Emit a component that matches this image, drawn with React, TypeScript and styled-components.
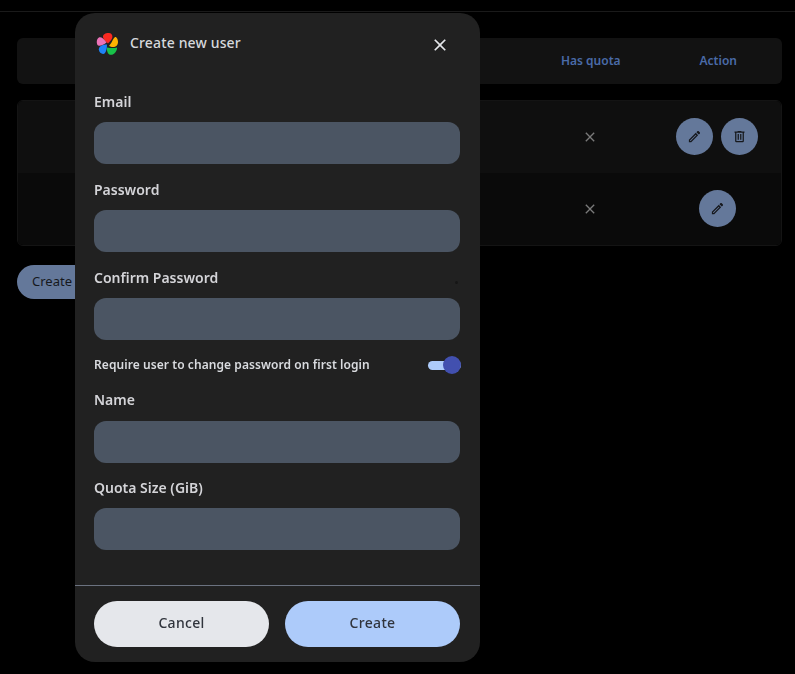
import * as React from 'react'
import styled, { createGlobalStyle } from 'styled-components'

const fontStack = `'Noto Sans', 'Open Sans', sans-serif`

const GlobalStyle = createGlobalStyle`
  html, body {
    margin: 0;
    height: 100%;
    background: #000;
    font-family: ${fontStack};
  }
  * {
    box-sizing: border-box;
  }
`

const fields = ['Email', 'Password', 'Confirm Password']
const extraFields = ['Name', 'Quota Size (GiB)']

const pencilPath =
  'M14.06,9L15,9.94L5.92,19H5V18.08L14.06,9M17.66,3C17.41,3 17.15,3.1 16.96,3.29L15.13,5.12L18.88,8.87L20.71,7.04C21.1,6.65 21.1,6 20.71,5.63L18.37,3.29C18.17,3.09 17.92,3 17.66,3M14.06,6.19L3,17.25V21H6.75L17.81,9.94L14.06,6.19Z'
const trashPath =
  'M9,3V4H4V6H5V19A2,2 0 0,0 7,21H17A2,2 0 0,0 19,19V6H20V4H15V3H9M7,6H17V19H7V6M9,8V17H11V8H9M13,8V17H15V8H13Z'
const closePath =
  'M19,6.41L17.59,5L12,10.59L6.41,5L5,6.41L10.59,12L5,17.59L6.41,19L12,13.41L17.59,19L19,17.59L13.41,12L19,6.41Z'

const Icon = ({ d, size, color }: { d: string; size: number; color?: string }) => (
  <svg width={size} height={size} viewBox="0 0 24 24" fill={color || 'currentColor'}>
    <path d={d} />
  </svg>
)

const Logo = () => (
  <svg width="24" height="24" viewBox="0 0 24 24">
    <path d="M7 4.500C7 2 10 .8 13 1 16 1.200 17 4 16 6.500 15.300 8 13.500 10 12 11.500 10 10 7 7 7 4.500Z" fill="#fa2921" />
    <path d="M15.500 10.500C16.500 8.500 17.500 6 18.800 5.200 20.500 4.500 22 7.500 22 10 22 13 20 15 17 15 15.500 15 14 14.500 13 14Z" fill="#ffb400" />
    <path d="M11 15.500C14 16 18 16.500 21 15.500 21.500 19 18 22.800 15 22.800 12 22.800 10.500 19 11 15.500Z" fill="#18c249" />
    <path d="M11 12.500C11 16 10.500 19 9 21 7.500 23 3 21.500 2.800 17.500 2.700 14.500 6 12.500 11 12.500Z" fill="#1e83f7" />
    <path d="M10.500 10.500C8.500 12.500 5 14 3 13.800 .5 13.500 .3 9 1.500 7 2.700 4.500 5 4.800 7 6.500 8.500 7.700 9.500 9 10.500 10.500Z" fill="#ec73b8" />
  </svg>
)

const App = () => (
  <>
    <GlobalStyle />
    <Page>
      <TopRule />
      <Content>
        <TableHead>
          <Cell /><Cell /><Cell /><Cell />
          <HeadCell>Has quota</HeadCell>
          <HeadCell>Action</HeadCell>
        </TableHead>
        <TableBody>
          <Row $odd>
            <Cell /><Cell /><Cell /><Cell />
            <Cell><Icon d={closePath} size={16} color="#7a7a7a" /></Cell>
            <Cell>
              <RoundButton><Icon d={pencilPath} size={15} /></RoundButton>
              <RoundButton><Icon d={trashPath} size={15} /></RoundButton>
            </Cell>
          </Row>
          <Row>
            <Cell /><Cell /><Cell /><Cell />
            <Cell><Icon d={closePath} size={16} color="#7a7a7a" /></Cell>
            <Cell>
              <RoundButton><Icon d={pencilPath} size={15} /></RoundButton>
            </Cell>
          </Row>
        </TableBody>
        <PageButton>Create</PageButton>
      </Content>
    </Page>
    <Modal>
      <ModalHeader>
        <Brand>
          <Logo />
          <Title>Create new user</Title>
        </Brand>
        <CloseButton><Icon d={closePath} size={20} /></CloseButton>
      </ModalHeader>
      <Form>
        {fields.map(field => (
          <Field key={field}>
            <Label>{field}</Label>
            <Input type="text" />
            {field === 'Confirm Password' && <StrayDot />}
          </Field>
        ))}
        <ToggleRow>
          <ToggleLabel>Require user to change password on first login</ToggleLabel>
          <Toggle><ToggleKnob /></Toggle>
        </ToggleRow>
        {extraFields.map(field => (
          <LowerField key={field}>
            <Label>{field}</Label>
            <Input type="text" />
          </LowerField>
        ))}
      </Form>
      <Footer>
        <FooterButton $primary={false}>Cancel</FooterButton>
        <FooterButton $primary>Create</FooterButton>
      </Footer>
    </Modal>
  </>
)

export default App

const Page = styled.div`
  min-height: 674px;
`

const TopRule = styled.div`
  height: 12px;
  border-bottom: 1px solid #1a1a1a;
`

const Content = styled.main`
  padding: 26px 13px 0 17px;
`

const TableHead = styled.div`
  display: grid;
  grid-template-columns: repeat(6, 1fr);
  height: 46px;
  align-items: center;
  background: #121212;
  border-radius: 6px;
`

const Cell = styled.div`
  display: flex;
  align-items: center;
  justify-content: center;
  gap: 8px;
`

const HeadCell = styled(Cell)`
  padding-bottom: 2px;
  color: #4a6ba8;
  font-size: 12px;
  font-weight: 600;
`

const TableBody = styled.div`
  margin-top: 16px;
  border: 1px solid #141414;
  border-radius: 6px;
  overflow: hidden;
`

const Row = styled.div<{ $odd?: boolean }>`
  display: grid;
  grid-template-columns: repeat(6, 1fr);
  height: 72px;
  padding-bottom: 1px;
  align-items: center;
  background: ${p => (p.$odd ? '#0f0f0f' : '#0a0a0a')};
`

const RoundButton = styled.button`
  display: flex;
  align-items: center;
  justify-content: center;
  width: 37px;
  height: 37px;
  padding: 0;
  border: 0;
  border-radius: 50%;
  background: #64789a;
  color: #16181d;
`

const PageButton = styled.button`
  display: block;
  margin-top: 19px;
  height: 34px;
  width: 120px;
  padding: 0 0 3px 15px;
  border: 0;
  border-radius: 17px;
  background: #64789a;
  color: #16181d;
  font-family: ${fontStack};
  font-size: 13px;
  text-align: left;
`

const Modal = styled.section`
  position: fixed;
  left: 75px;
  top: 13px;
  width: 405px;
  height: 649px;
  display: flex;
  flex-direction: column;
  background: #212121;
  border-radius: 20px;
`

const ModalHeader = styled.header`
  display: flex;
  align-items: center;
  justify-content: space-between;
  padding: 19px 30px 0 21px;
`

const Brand = styled.div`
  display: flex;
  align-items: center;
  gap: 10px;
`

const Title = styled.h1`
  margin: 0;
  padding-bottom: 3px;
  color: #d6d8dc;
  font-size: 14px;
  font-weight: 500;
  letter-spacing: 0.15px;
`

const CloseButton = styled.button`
  display: flex;
  margin-top: 2px;
  padding: 0;
  border: 0;
  background: none;
  color: #e5e7eb;
`

const Form = styled.div`
  flex: 1;
  display: flex;
  flex-direction: column;
  padding: 36px 20px 0 19px;
`

const Field = styled.label`
  position: relative;
  display: block;
  margin-bottom: 16px;
`

const Label = styled.div`
  height: 20px;
  margin: 0 0 10px;
  color: #d4d4d8;
  font-size: 14px;
  font-weight: 600;
  line-height: 20px;
`

const LowerField = styled(Field)`
  margin-bottom: 15.400px;

  ${Label} {
    margin-bottom: 10.500px;
  }
`

const Input = styled.input`
  display: block;
  width: 366px;
  height: 42px;
  padding: 0 16px;
  border: 0;
  border-radius: 12px;
  background: #4b5563;
`

const StrayDot = styled.span`
  position: absolute;
  left: 361px;
  top: 13px;
  width: 3px;
  height: 3px;
  border-radius: 50%;
  background: #161616;
`

const ToggleRow = styled.div`
  display: flex;
  align-items: center;
  justify-content: space-between;
  height: 20px;
  margin: -1px -1px 15px 0;
`

const ToggleLabel = styled.span`
  padding-bottom: 2px;
  color: #d9dbdf;
  font-size: 12px;
  font-weight: 600;
  letter-spacing: 0.07px;
`

const Toggle = styled.span`
  position: relative;
  width: 33px;
  height: 9px;
  border-radius: 5px;
  background: #adcbfa;
`

const ToggleKnob = styled.span`
  position: absolute;
  right: 0;
  top: -4.500px;
  width: 18px;
  height: 18px;
  border-radius: 50%;
  background: #4250af;
`

const Footer = styled.footer`
  display: grid;
  grid-template-columns: 175px 175px;
  gap: 16px;
  padding: 15px 20px 15px 19px;
  border-top: 1px solid #6b7280;
`

const FooterButton = styled.button<{ $primary: boolean }>`
  height: 46px;
  padding: 0 0 3px;
  border: 0;
  border-radius: 23px;
  background: ${p => (p.$primary ? '#adcbfa' : '#e5e7eb')};
  color: #30343c;
  font-family: ${fontStack};
  font-size: 14px;
  font-weight: 500;
  letter-spacing: 0.3px;
`
